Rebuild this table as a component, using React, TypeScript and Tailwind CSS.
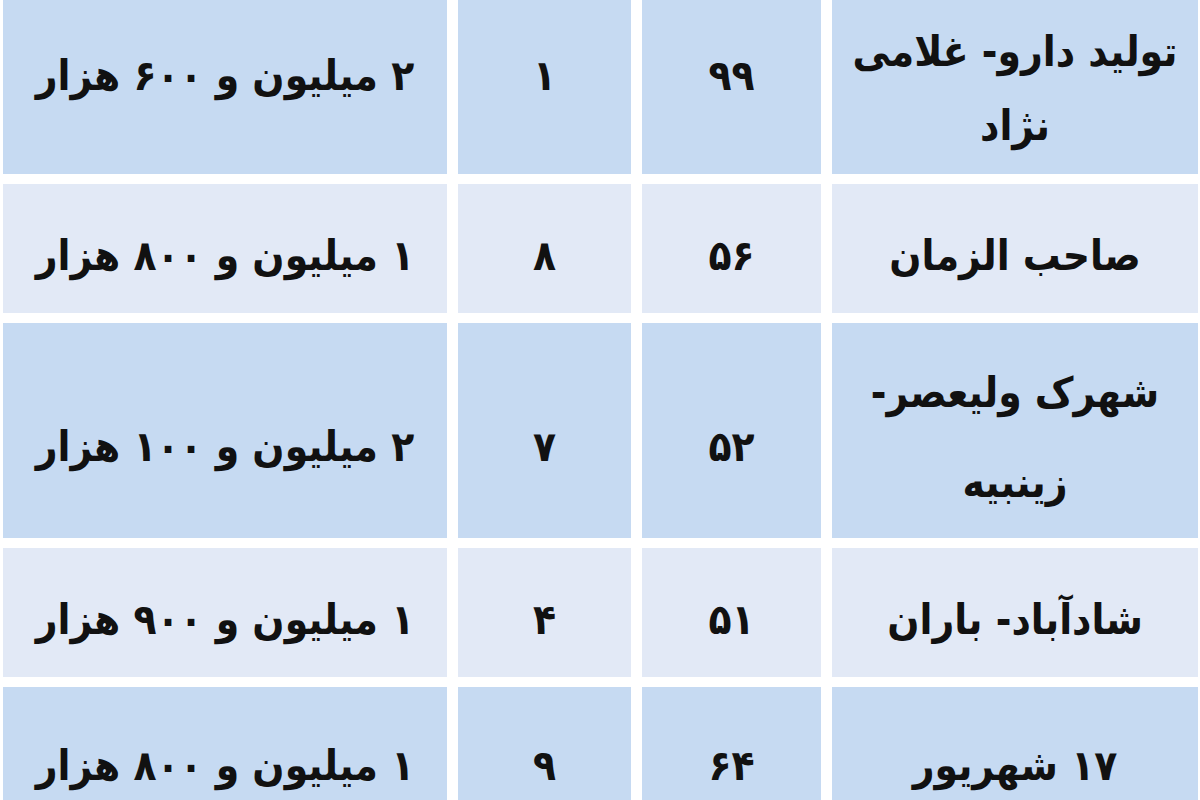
const rows = [
  {
    name: ["تولید دارو- غلامی", "نژاد"],
    area: "۹۹",
    count: "۱",
    price: "۲ میلیون و ۶۰۰ هزار",
    dark: true,
    h: "h-[174px]",
    pad: "pb-[22px]",
    namePad: "pt-[4px]",
    lead: "leading-[74px]",
  },
  {
    name: ["صاحب الزمان"],
    area: "۵۶",
    count: "۸",
    price: "۱ میلیون و ۸۰۰ هزار",
    dark: false,
    h: "h-[129px]",
    pad: "pt-[14px]",
    namePad: "pt-[14px]",
    lead: "leading-[72px]",
  },
  {
    name: ["شهرک ولیعصر-", "زینبیه"],
    area: "۵۲",
    count: "۷",
    price: "۲ میلیون و ۱۰۰ هزار",
    dark: true,
    h: "h-[215px]",
    pad: "pt-[32px]",
    namePad: "pt-[14px]",
    lead: "leading-[90px]",
  },
  {
    name: ["شادآباد- باران"],
    area: "۵۱",
    count: "۴",
    price: "۱ میلیون و ۹۰۰ هزار",
    dark: false,
    h: "h-[129px]",
    pad: "pt-[14px]",
    namePad: "pt-[14px]",
    lead: "leading-[72px]",
  },
  {
    name: ["۱۷ شهریور"],
    area: "۶۴",
    count: "۹",
    price: "۱ میلیون و ۸۰۰ هزار",
    dark: true,
    h: "h-[128px]",
    pad: "pt-[30px]",
    namePad: "pt-[30px]",
    lead: "leading-[72px]",
  },
];

function Cell({ dark, className, children }: { dark: boolean; className?: string; children: React.ReactNode }) {
  return (
    <div
      dir="rtl"
      className={`flex flex-col items-center justify-center text-center ${
        dark ? "bg-[#c6daf2]" : "bg-[#e2e9f6]"
      } ${className ?? ""}`}
    >
      {children}
    </div>
  );
}

export default function App() {
  return (
    <div className="w-[1200px] h-[800px] overflow-hidden bg-white">
      <div
        className="grid grid-cols-[444px_173px_179px_366px] gap-x-[11px] gap-y-[10px] px-[3px] text-[42px] font-bold text-[#111]"
        style={{ fontFamily: '"DejaVu Sans Condensed", "DejaVu Sans", sans-serif' }}
      >
        {rows.map((r, i) => (
          <div key={i} className="contents">
            <Cell dark={r.dark} className={`${r.h} ${r.pad}`}>
              <span className="leading-none whitespace-nowrap">{r.price}</span>
            </Cell>
            <Cell dark={r.dark} className={`${r.h} ${r.pad}`}>
              <span className="leading-none">{r.count}</span>
            </Cell>
            <Cell dark={r.dark} className={`${r.h} ${r.pad}`}>
              <span className="leading-none">{r.area}</span>
            </Cell>
            <Cell dark={r.dark} className={`${r.h} ${r.namePad}`}>
              {r.name.map((line, j) => (
                <span key={j} className={`${r.lead} whitespace-nowrap`}>
                  {line}
                </span>
              ))}
            </Cell>
          </div>
        ))}
      </div>
    </div>
  );
}
